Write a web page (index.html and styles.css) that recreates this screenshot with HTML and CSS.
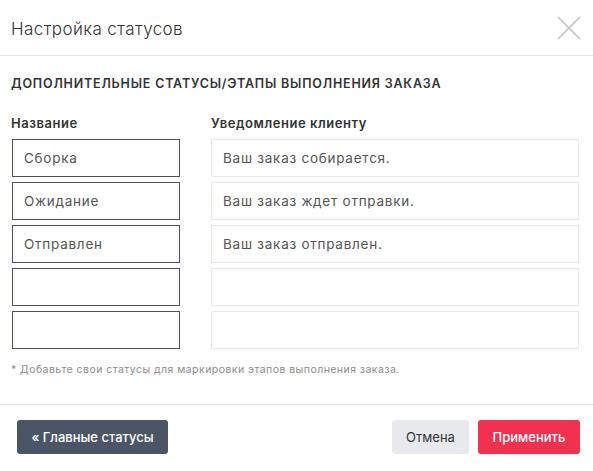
FILE: index.html
```html
<!DOCTYPE html>
<html lang="ru">
<head>
<meta charset="utf-8">
<title>Настройка статусов</title>
<link rel="stylesheet" href="styles.css">
</head>
<body>
<div class="modal">
  <header class="modal-header">
    <h1 class="modal-title">Настройка статусов</h1>
    <button class="close" aria-label="Закрыть">
      <svg width="24" height="24" viewBox="0 0 24 24"><path d="M1 1L23 23M23 1L1 23" stroke="#cccccc" stroke-width="1.8" fill="none"/></svg>
    </button>
  </header>
  <section class="modal-body">
    <h2 class="section-title">ДОПОЛНИТЕЛЬНЫЕ СТАТУСЫ/ЭТАПЫ ВЫПОЛНЕНИЯ ЗАКАЗА</h2>
    <div class="grid">
      <div class="col-label">Название</div>
      <div class="col-label">Уведомление клиенту</div>
      <input class="name" value="Сборка">
      <input class="note" value="Ваш заказ собирается.">
      <input class="name" value="Ожидание">
      <input class="note" value="Ваш заказ ждет отправки.">
      <input class="name" value="Отправлен">
      <input class="note" value="Ваш заказ отправлен.">
      <input class="name" value="">
      <input class="note" value="">
      <input class="name" value="">
      <input class="note" value="">
    </div>
    <p class="hint">* Добавьте свои статусы для маркировки этапов выполнения заказа.</p>
  </section>
  <footer class="modal-footer">
    <button class="btn btn-dark">« Главные статусы</button>
    <div class="actions">
      <button class="btn btn-light">Отмена</button>
      <button class="btn btn-red">Применить</button>
    </div>
  </footer>
</div>
</body>
</html>
```

FILE: styles.css
```css
* { box-sizing: border-box; }
html, body { margin: 0; padding: 0; background: #fff; }
body { font-family: Inter, Roboto, sans-serif; color: #333; }
.modal { width: 593px; }
.modal-header {
  height: 56px;
  border-bottom: 1px solid #e6e6e6;
  display: flex;
  align-items: center;
  justify-content: space-between;
  padding: 0 12px 0 11px;
}
.modal-title {
  margin: 0;
  font-size: 17px;
  font-weight: 300;
  color: #333;
  letter-spacing: 0.4px;
  padding-top: 2px;
}
.close {
  border: 0; background: none; padding: 0;
  width: 24px; height: 24px;
  display: block;
}
.close svg { display: block; }
.modal-body { padding: 20px 14px 0 11px; }
.section-title {
  margin: 0;
  font-size: 12.5px;
  font-weight: 600;
  color: #333;
  line-height: 16px;
  letter-spacing: 0.8px;
}
.grid {
  display: grid;
  grid-template-columns: 169px 368px;
  column-gap: 31px;
  row-gap: 5px;
  margin-top: 23px;
}
.col-label {
  font-size: 13px;
  font-weight: 600;
  color: #333;
  line-height: 16px;
  letter-spacing: 0.55px;
  margin-bottom: 3px;
}
.grid input {
  height: 38px;
  margin: 0;
  font-family: inherit;
  font-size: 13.5px;
  letter-spacing: 0.75px;
  color: #555;
  padding: 0 11px;
  background: #fff;
  outline: none;
}
.name { border: 1.5px solid #4b5160; border-radius: 0; margin-left: 1px !important; width: 168px; }
.note { border: 1.5px solid #e8e8e8; border-radius: 0; }
.hint {
  margin: 14px 0 0;
  font-size: 10.5px;
  letter-spacing: 0.45px;
  color: #8c8c8c;
  line-height: 14px;
}
.modal-footer {
  margin-top: 27px;
  border-top: 1px solid #e6e6e6;
  padding: 15px 13px 0 17px;
  display: flex;
  justify-content: space-between;
}
.actions { display: flex; gap: 9px; }
.btn {
  height: 34px;
  border: 0;
  border-radius: 3px;
  font-family: inherit;
  font-size: 13px;
  padding: 0 10px;
  cursor: pointer;
}
.btn-dark { background: #4b5565; color: #fff; font-weight: 500; width: 151px; }
.btn-light { background: #e8e9ed; color: #333; font-weight: 400; width: 77px; }
.btn-red { background: #f2304f; color: #fff; font-weight: 500; width: 102px; }
```
